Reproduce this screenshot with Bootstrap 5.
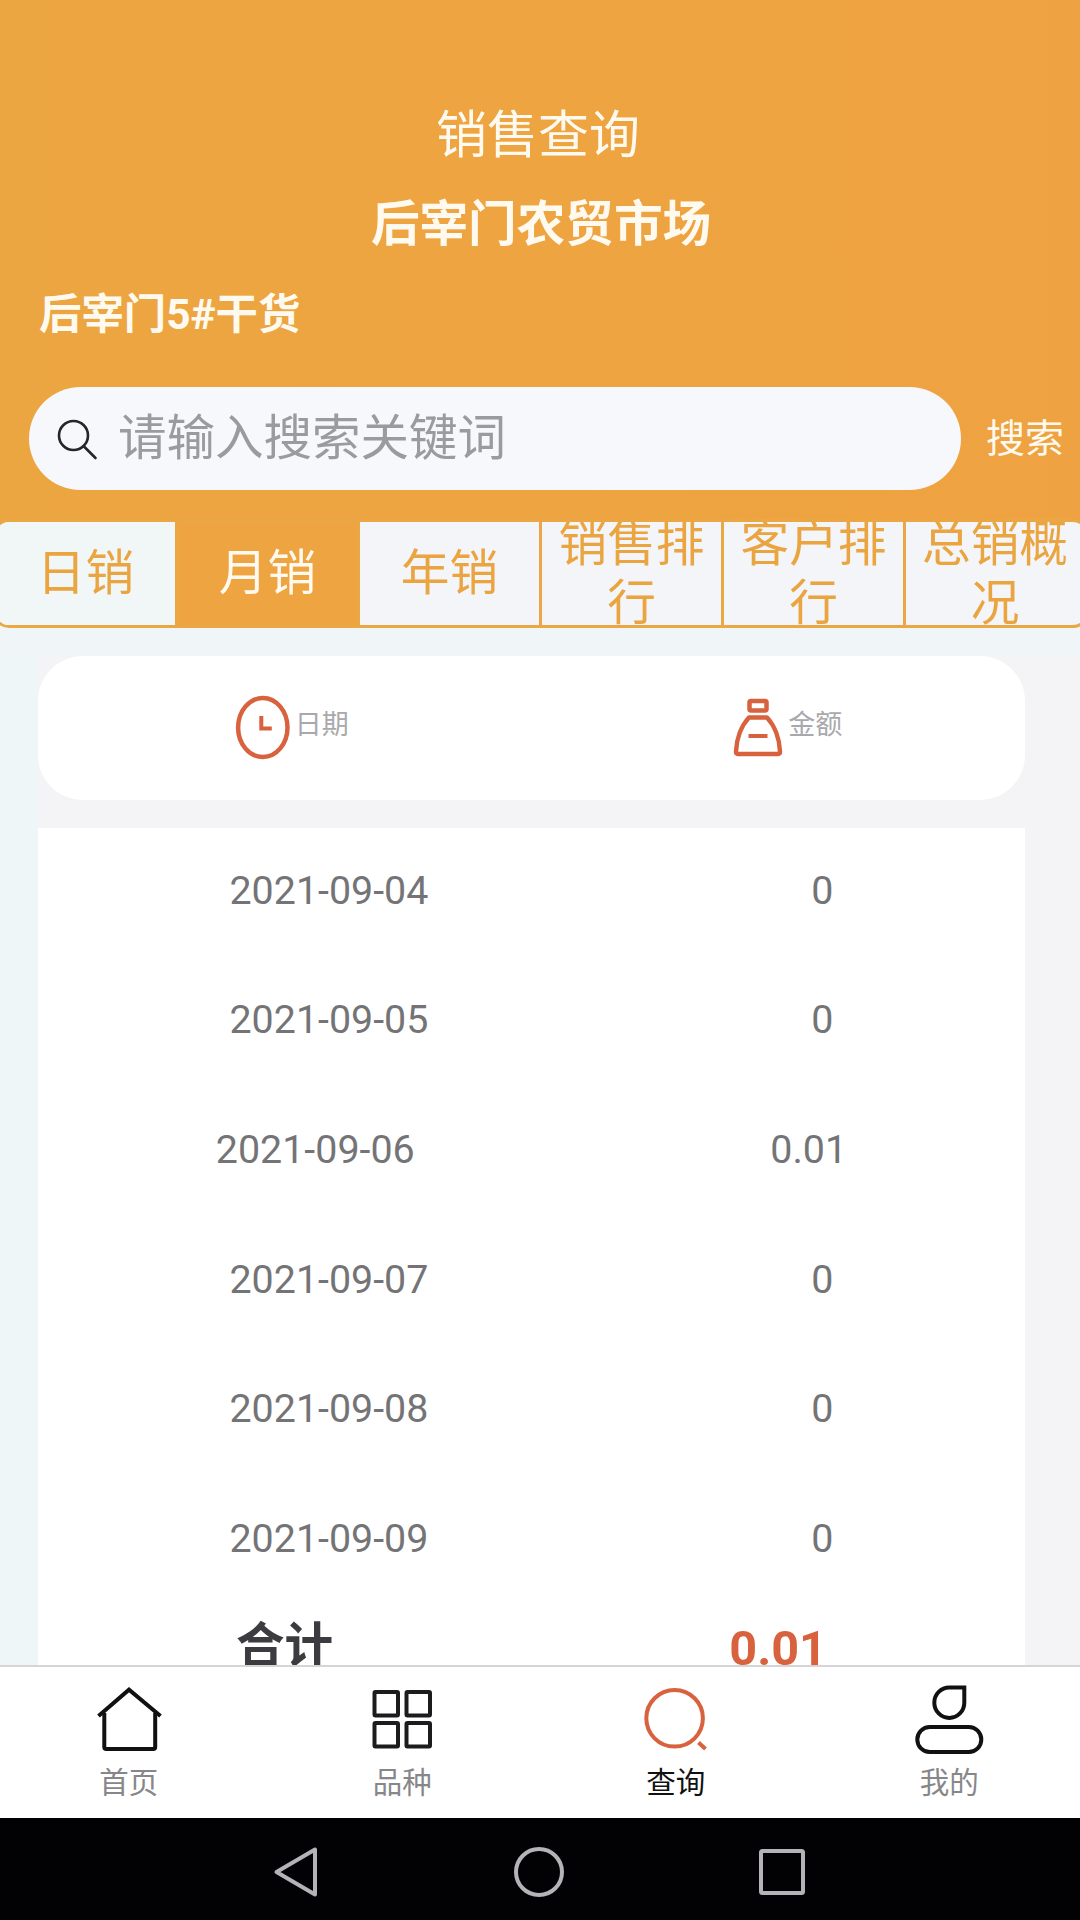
<!DOCTYPE html>
<html lang="zh-CN">
<head>
<meta charset="utf-8">
<meta name="viewport" content="width=device-width, initial-scale=1">
<title>销售查询</title>
<link href="https://cdn.jsdelivr.net/npm/bootstrap@5.3.0/dist/css/bootstrap.min.css" rel="stylesheet">
<style>
  body { font-family: Roboto, "Noto Sans CJK SC", sans-serif; background: #f4f4f7; line-height: 1.2; }
  .screen { width: 1080px; height: 1920px; }
  .top-area { height: 522px; background: linear-gradient(90deg, #eca641, #efa241); color: #fffaf0; padding-top: 106px; }
  .page-title { font-size: 51px; line-height: 60px; padding-right: 4px; }
  .market-name { font-size: 48.6px; line-height: 60px; margin-top: 29px; padding-left: 2px; }
  .stall-name { font-size: 42.4px; line-height: 50px; margin: 35px 0 0 39px; }
  .search-line { margin-top: 47px; padding-left: 29px; }
  .search-pill { width: 932px; height: 103px; background: #f7f8fb; padding-left: 27px; }
  .search-input { font-size: 48.5px; line-height: 60px; color: #9a9b9f; background: transparent; padding: 0; margin-left: 18px; font-family: inherit; outline: 0; }
  .search-input::placeholder { color: #9a9b9f; opacity: 1; }
  .search-btn { font-size: 39px; line-height: 50px; margin-left: 25px; color: #fffaf0; }
  .period-tabs { margin: -3px -9px 0 -7px; height: 109px; border: 3px solid #eaa743; border-radius: 16px; background: #f3f5f8; color: #eaa440; font-size: 48.7px; line-height: 59px; }
  .period-tab { flex: 0 0 182px; border-right: 3px solid #eaa743; overflow: hidden; padding: 0 14px; }
  .period-tab:first-child { background: #f1f6f7; }
  .period-tab:last-child { border-right: 0; flex-basis: 178px; }
  .period-tab.active { background: #eea440; color: #fffaf0; }
  .content-area { background: linear-gradient(90deg, #eff6f7 0 38px, #f4f4f7 38px); padding: 0 55px 0 38px; min-height: 0; }
  .content-gap { height: 28px; background: #f0f6f7; margin: 0 -55px 0 -38px; }
  .head-card { height: 144px; border-radius: 45px; color: #a9a9ad; font-size: 27px; line-height: 32px; padding-bottom: 8px; }
  .head-label { margin: 2px 1px 0 -1px; }
  .sale-list { margin-top: 28px; color: #747477; font-size: 39.4px; padding-bottom: 40px; }
  .sale-row { height: 129.7px; padding-bottom: 5px; }
  .total-row { font-size: 48.6px; line-height: 58px; color: #3c3c40; margin-top: 12px; }
  .total-sum { color: #d9623e; padding-top: 2px; }
  .bottom-tabs { height: 153px; border-top: 2px solid #d5d5d7; padding: 0 6px 0 0; }
  .bottom-tabs-inner { margin: 0 -12px 0 -8px; }
  .tab-icon { margin-top: 15px; }
  .tab-label { font-size: 29.5px; line-height: 36px; margin-top: 7px; color: #87878a; }
  .active .tab-label { color: #111; }
  .sys-bar { height: 102px; background: #020104; padding: 5px 3px 0 0; }
  .sys-key { width: 243px; }
  svg { display: block; flex: none; fill: none; }
</style>
</head>
<body>
<div class="screen d-flex flex-column overflow-hidden">
  <header class="top-area flex-shrink-0">
    <div class="page-title text-center">销售查询</div>
    <div class="market-name text-center fw-bold">后宰门农贸市场</div>
    <div class="stall-name fw-bold">后宰门5#干货</div>
    <form class="search-line d-flex align-items-center">
      <div class="search-pill rounded-pill d-flex align-items-center">
        <svg width="44" height="44" viewBox="0 0 44 44" stroke="#26262a" stroke-width="2.6" stroke-linecap="round"><circle cx="17.500" cy="18.500" r="14.500"/><path d="M28 29.500 39.500 41"/></svg>
        <input class="search-input border-0 flex-grow-1" type="text" placeholder="请输入搜索关键词">
      </div>
      <div class="search-btn text-nowrap">搜索</div>
    </form>
  </header>

  <nav class="period-tabs d-flex flex-shrink-0 overflow-hidden text-center">
    <div class="period-tab d-flex align-items-center justify-content-center">日销</div>
    <div class="period-tab active d-flex align-items-center justify-content-center">月销</div>
    <div class="period-tab d-flex align-items-center justify-content-center">年销</div>
    <div class="period-tab d-flex align-items-center justify-content-center">销售排行</div>
    <div class="period-tab d-flex align-items-center justify-content-center">客户排行</div>
    <div class="period-tab d-flex align-items-center justify-content-center">总销概况</div>
  </nav>

  <main class="content-area flex-grow-1 overflow-hidden">
    <div class="content-gap"></div>
    <div class="head-card bg-white d-flex">
      <div class="w-50 d-flex align-items-center justify-content-center">
        <svg width="76" height="80" viewBox="220 684 76 80" stroke="#d9623e" stroke-width="4.500"><ellipse cx="262.800" cy="727.500" rx="24.700" ry="29.500"/><path d="M261.300 716v12.500h10.500" stroke-width="4"/></svg>
        <span class="head-label">日期</span>
      </div>
      <div class="w-50 d-flex align-items-center justify-content-center">
        <svg width="76" height="80" viewBox="713 684 76 80" stroke="#d9623e" stroke-width="4.500" stroke-linejoin="round"><rect x="749.500" y="701" width="17" height="9.500" rx="1.500"/><path d="M749 717.500h18c7.500 8 12.500 21 13 34q0 2.500-2.500 2.500h-39q-2.500 0-2.500-2.500c.5-13 5.500-26 13-34z"/><path d="M748.500 736h19" stroke-width="4"/></svg>
        <span class="head-label">金额</span>
      </div>
    </div>
    <div class="sale-list bg-white">
      <div class="sale-row d-flex align-items-center justify-content-around"><span>2021-09-04</span><span>0</span></div>
      <div class="sale-row d-flex align-items-center justify-content-around"><span>2021-09-05</span><span>0</span></div>
      <div class="sale-row d-flex align-items-center justify-content-around"><span>2021-09-06</span><span>0.01</span></div>
      <div class="sale-row d-flex align-items-center justify-content-around"><span>2021-09-07</span><span>0</span></div>
      <div class="sale-row d-flex align-items-center justify-content-around"><span>2021-09-08</span><span>0</span></div>
      <div class="sale-row d-flex align-items-center justify-content-around"><span>2021-09-09</span><span>0</span></div>
      <div class="total-row d-flex justify-content-around fw-bold"><span>合计</span><span class="total-sum">0.01</span></div>
    </div>
  </main>

  <footer class="bottom-tabs bg-white flex-shrink-0">
    <div class="bottom-tabs-inner d-flex">
      <div class="w-25 d-flex flex-column align-items-center">
        <svg class="tab-icon" width="76" height="76" viewBox="91 1681 76 76" stroke="#111" stroke-width="4"><path d="M98.500 1715 129 1688.700l31.500 26.300"/><path d="M104.300 1712v34q0 2 2 2h46.900q2 0 2-2v-34"/></svg>
        <span class="tab-label">首页</span>
      </div>
      <div class="w-25 d-flex flex-column align-items-center">
        <svg class="tab-icon" width="76" height="76" viewBox="364.500 1682 76 76" stroke="#1c1c1e" stroke-width="4"><rect x="375" y="1692" width="23.500" height="23.500" rx="1"/><rect x="407" y="1692" width="23.500" height="23.500" rx="1"/><rect x="375" y="1723" width="23.500" height="23.500" rx="1"/><rect x="407" y="1723" width="23.500" height="23.500" rx="1"/></svg>
        <span class="tab-label">品种</span>
      </div>
      <div class="w-25 d-flex flex-column align-items-center active">
        <svg class="tab-icon" width="76" height="76" viewBox="638 1682 76 76" stroke="#d9623e" stroke-width="4"><circle cx="674.600" cy="1718.300" r="28.300"/><path d="M698.500 1742.500 705.500 1749"/></svg>
        <span class="tab-label">查询</span>
      </div>
      <div class="w-25 d-flex flex-column align-items-center">
        <svg class="tab-icon" width="76" height="76" viewBox="911 1682 76 76" stroke="#111" stroke-width="4"><path d="M949.300 1687.500h15v15.200a15 15.200 0 1 1-15-15.200z"/><rect x="917.300" y="1727" width="64" height="25" rx="12.500"/></svg>
        <span class="tab-label">我的</span>
      </div>
    </div>
  </footer>

  <div class="sys-bar flex-shrink-0 d-flex align-items-center justify-content-center">
    <div class="sys-key d-flex justify-content-center"><svg width="54" height="54" viewBox="0 0 54 54" stroke="#b5b3b7" stroke-width="4" stroke-linejoin="round"><path d="M7.500 27 46 4.500v45z"/></svg></div>
    <div class="sys-key d-flex justify-content-center"><svg width="54" height="54" viewBox="0 0 54 54" stroke="#b5b3b7" stroke-width="4"><circle cx="27" cy="27" r="23"/></svg></div>
    <div class="sys-key d-flex justify-content-center"><svg width="54" height="54" viewBox="0 0 54 54" stroke="#b5b3b7" stroke-width="4"><rect x="6" y="6" width="42" height="42" rx="1.500"/></svg></div>
  </div>
</div>
<script src="https://cdn.jsdelivr.net/npm/bootstrap@5.3.0/dist/js/bootstrap.bundle.min.js"></script>
</body>
</html>
